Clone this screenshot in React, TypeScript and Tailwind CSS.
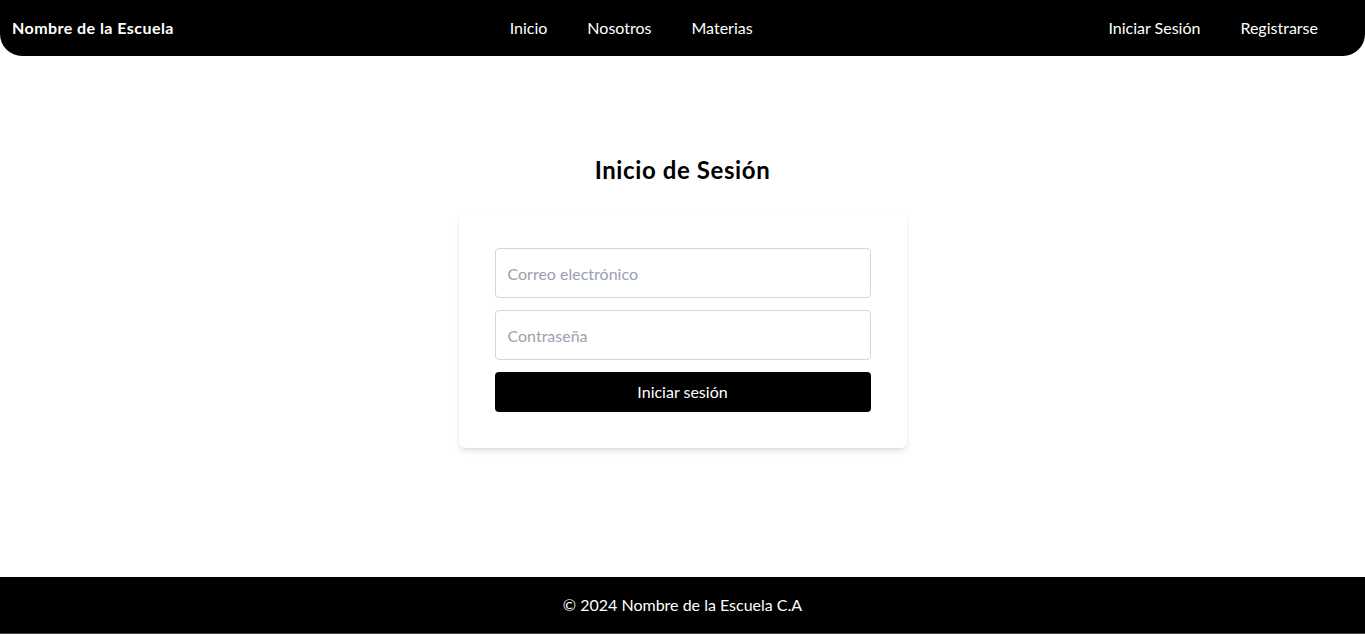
import React from "react";

const App = () => {
  return (
    <div className="h-screen flex flex-col bg-white font-['Lato',sans-serif] text-black">
      <nav className="h-14 bg-black text-white rounded-b-[22px] flex items-center justify-between pl-3 pr-[27px]">
        <div className="text-base font-bold tracking-[0.45px]">Nombre de la Escuela</div>
        <ul className="flex">
          <li className="px-5">Inicio</li>
          <li className="px-5">Nosotros</li>
          <li className="px-5">Materias</li>
        </ul>
        <ul className="flex">
          <li className="px-5">Iniciar Sesión</li>
          <li className="px-5">Registrarse</li>
        </ul>
      </nav>

      <main className="flex-1 flex flex-col items-center pt-[98px]">
        <h1 className="text-2xl font-bold leading-8 mb-[26px] tracking-[0.6px]">Inicio de Sesión</h1>
        <div className="w-[448px] bg-white rounded-md shadow-md p-9 flex flex-col gap-3">
          <input
            type="email"
            placeholder="Correo electrónico"
            className="h-[50px] border border-gray-300 rounded px-3 text-base placeholder:text-gray-400 outline-none"
          />
          <input
            type="password"
            placeholder="Contraseña"
            className="h-[50px] border border-gray-300 rounded px-3 text-base placeholder:text-gray-400 outline-none"
          />
          <button className="h-10 bg-black text-white rounded text-base">Iniciar sesión</button>
        </div>
      </main>

      <footer className="h-[57px] bg-black text-white flex items-center justify-center border-b border-[#4a4444]">
        <p>© 2024 Nombre de la Escuela C.A</p>
      </footer>
    </div>
  );
};

export default App;
